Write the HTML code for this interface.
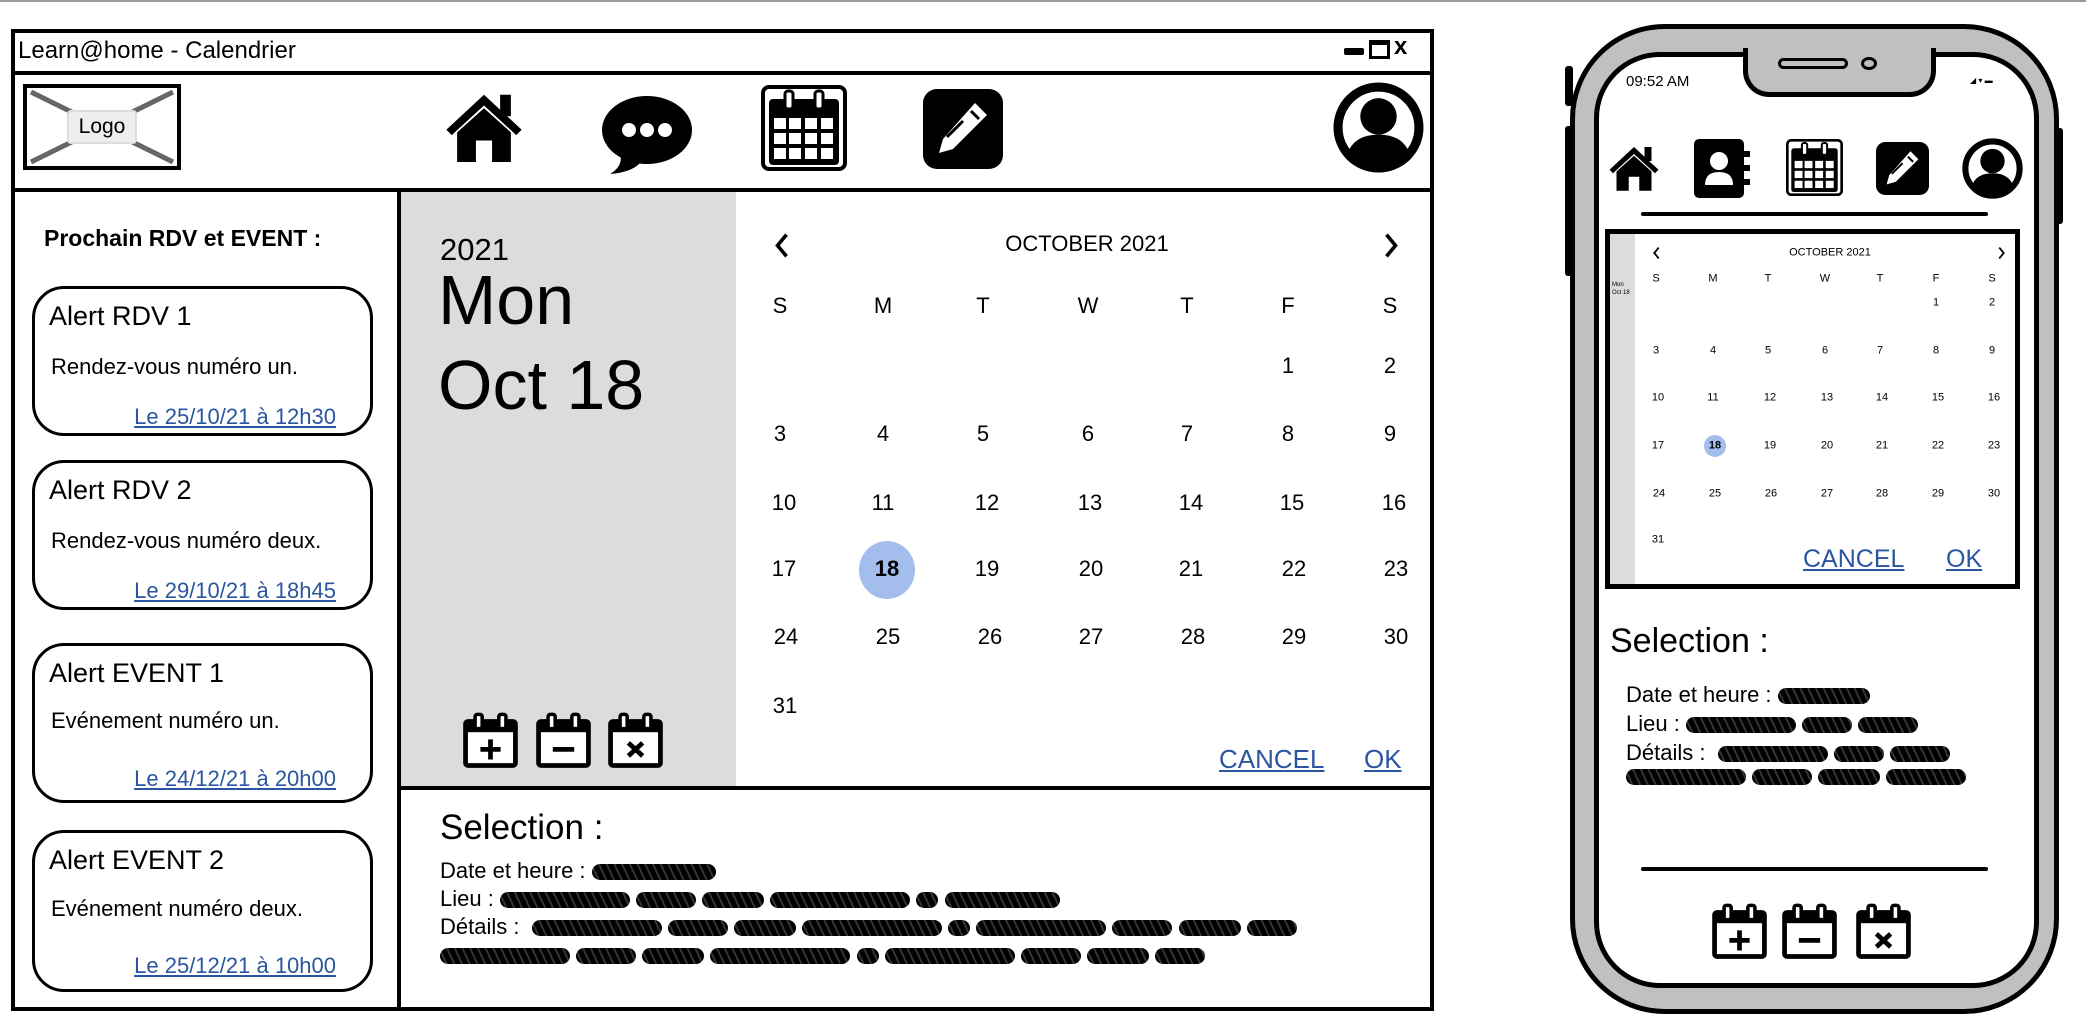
<!DOCTYPE html>
<html><head><meta charset="utf-8">
<style>
*{margin:0;padding:0;box-sizing:border-box}
body{width:2086px;height:1030px;background:#fff;position:relative;overflow:hidden;font-family:"Liberation Sans",sans-serif;color:#000}
.a{position:absolute}
.box{position:absolute;border:4px solid #000}
.d{position:absolute;width:70px;margin-left:-35px;text-align:center;line-height:1;transform:translateY(-50%);font-size:22px}
.m{position:absolute;width:30px;margin-left:-15px;text-align:center;line-height:1;transform:translateY(-50%);font-size:11px}
.card{position:absolute;left:32px;width:341px;border:3px solid #000;border-radius:32px}
.card .t{position:absolute;left:14px;top:12px;font-size:27px}
.card .b{position:absolute;left:16px;font-size:22px}
.card .l{position:absolute;right:34px;font-size:22px;color:#2a55a0;text-decoration:underline}
.s{display:inline-block;height:16px;background:repeating-linear-gradient(65deg,#000 0 5px,#333 5px 7px);border-radius:8px;vertical-align:middle}
.blue{color:#2a55a0;text-decoration:underline}
</style></head><body>
<svg width="0" height="0" style="position:absolute">
<defs>
<symbol id="cal" viewBox="0 0 48 48">
<rect x="3" y="8" width="42" height="37" rx="2" fill="#fff" stroke="#000" stroke-width="4"/>
<rect x="3" y="8" width="42" height="9" fill="#000"/>
<rect x="11" y="2" width="6" height="12" rx="2" fill="#fff" stroke="#000" stroke-width="3"/>
<rect x="31" y="2" width="6" height="12" rx="2" fill="#fff" stroke="#000" stroke-width="3"/>
</symbol>
<symbol id="home" viewBox="0 0 64 64">
<path d="M4 34 L32 8 L60 34 L56 38 L32 16 L8 38 Z" fill="#000"/>
<rect x="44" y="8" width="8" height="16" fill="#000"/>
<path d="M12 36 L32 18 L52 36 L52 58 L38 58 L38 42 L26 42 L26 58 L12 58 Z" fill="#000"/>
</symbol>
<symbol id="user" viewBox="0 0 90 90">
<circle cx="45" cy="45" r="40" fill="#fff" stroke="#000" stroke-width="9"/>
<circle cx="45" cy="34" r="18" fill="#000"/>
<path d="M14 72 Q20 52 45 52 Q70 52 76 72 Q62 86 45 86 Q28 86 14 72Z" fill="#000"/>
</symbol>
<symbol id="edit" viewBox="0 0 80 80">
<rect x="0" y="0" width="80" height="80" rx="14" fill="#000"/>
<path d="M52 14 L64 26 L30 60 L16 64 L20 50 Z" fill="#fff"/>
<path d="M48 22 L56 30" stroke="#000" stroke-width="3"/>
<path d="M24 48 L40 32" stroke="#000" stroke-width="3"/>
</symbol>
<symbol id="grid" viewBox="0 0 86 86">
<rect x="2" y="2" width="82" height="82" rx="6" fill="#fff" stroke="#000" stroke-width="4"/>
<rect x="8" y="14" width="70" height="66" rx="4" fill="#000"/>
<rect x="24" y="6" width="8" height="18" rx="3" fill="#fff" stroke="#000" stroke-width="3"/>
<rect x="54" y="6" width="8" height="18" rx="3" fill="#fff" stroke="#000" stroke-width="3"/>
<g fill="#fff">
<rect x="13" y="33" width="12" height="11"/><rect x="28" y="33" width="12" height="11"/><rect x="44" y="33" width="12" height="11"/><rect x="60" y="33" width="12" height="11"/>
<rect x="13" y="48" width="12" height="11"/><rect x="28" y="48" width="12" height="11"/><rect x="44" y="48" width="12" height="11"/><rect x="60" y="48" width="12" height="11"/>
<rect x="13" y="63" width="12" height="11"/><rect x="28" y="63" width="12" height="11"/><rect x="44" y="63" width="12" height="11"/><rect x="60" y="63" width="12" height="11"/>
</g>
</symbol>
<symbol id="chl" viewBox="0 0 20 30"><path d="M15 3 L5 15 L15 27" fill="none" stroke="#000" stroke-width="4"/></symbol>
<symbol id="chr" viewBox="0 0 20 30"><path d="M5 3 L15 15 L5 27" fill="none" stroke="#000" stroke-width="4"/></symbol>
</defs></svg>

<div class="a" style="left:0;top:0;width:2086px;height:2px;background:#999"></div>

<!-- window -->
<div class="box" style="left:11px;top:29px;width:1423px;height:982px"></div>
<div class="a" style="left:18px;top:37px;font-size:24px">Learn@home - Calendrier</div>
<div class="a" style="left:1344px;top:48px;width:20px;height:7px;background:#000;border-radius:2px"></div>
<div class="a" style="left:1369px;top:40px;width:21px;height:19px;border:3px solid #000;border-top-width:5px"></div>
<div class="a" style="left:1394px;top:33px;font-size:24px;font-weight:bold">x</div>
<div class="a" style="left:11px;top:71px;width:1423px;height:4px;background:#000"></div>

<!-- logo -->
<div class="box" style="left:23px;top:84px;width:158px;height:86px;overflow:hidden">
<svg class="a" style="left:0;top:0" width="150" height="78"><line x1="4" y1="4" x2="146" y2="74" stroke="#666" stroke-width="5"/><line x1="146" y1="4" x2="4" y2="74" stroke="#666" stroke-width="5"/></svg>
<div class="a" style="left:40px;top:22px;width:70px;height:34px;background:#eee;border:2px solid #ddd;border-radius:4px;font-size:21px;text-align:center;line-height:30px">Logo</div>
</div>
<svg class="a" style="left:441px;top:84px" width="86" height="86"><use href="#home"/></svg>
<svg class="a" style="left:600px;top:92px" width="94" height="84" viewBox="0 0 94 84"><ellipse cx="47" cy="38" rx="45" ry="34" fill="#000"/><path d="M20 60 Q24 74 10 82 Q36 80 44 66Z" fill="#000"/><circle cx="29" cy="38" r="7" fill="#fff"/><circle cx="47" cy="38" r="7" fill="#fff"/><circle cx="65" cy="38" r="7" fill="#fff"/></svg>
<svg class="a" style="left:761px;top:85px" width="86" height="86"><use href="#grid"/></svg>
<svg class="a" style="left:923px;top:89px" width="80" height="80"><use href="#edit"/></svg>
<svg class="a" style="left:1333px;top:82px" width="91" height="91"><use href="#user"/></svg>
<div class="a" style="left:11px;top:188px;width:1423px;height:4px;background:#000"></div>

<!-- left panel -->
<div class="a" style="left:397px;top:190px;width:4px;height:821px;background:#000"></div>
<div class="a" style="left:44px;top:225px;font-size:23px;font-weight:bold">Prochain RDV et EVENT :</div>
<div class="card" style="top:286px;height:150px"><div class="t">Alert RDV 1</div><div class="b" style="top:65px">Rendez-vous numéro un.</div><div class="l" style="top:115px">Le 25/10/21 à 12h30</div></div>
<div class="card" style="top:460px;height:150px"><div class="t">Alert RDV 2</div><div class="b" style="top:65px">Rendez-vous numéro deux.</div><div class="l" style="top:115px">Le 29/10/21 à 18h45</div></div>
<div class="card" style="top:643px;height:160px"><div class="t">Alert EVENT 1</div><div class="b" style="top:62px">Evénement numéro un.</div><div class="l" style="top:120px">Le 24/12/21 à 20h00</div></div>
<div class="card" style="top:830px;height:162px"><div class="t">Alert EVENT 2</div><div class="b" style="top:63px">Evénement numéro deux.</div><div class="l" style="top:120px">Le 25/12/21 à 10h00</div></div>

<!-- gray date panel -->
<div class="a" style="left:401px;top:192px;width:335px;height:595px;background:#dcdcdc"></div>
<div class="a" style="left:440px;top:232px;font-size:31px">2021</div>
<div class="a" style="left:438px;top:265px;font-size:70px;line-height:1">Mon</div>
<div class="a" style="left:438px;top:350px;font-size:70px;line-height:1">Oct 18</div>
<svg class="a" style="left:462px;top:712px" width="57" height="57" viewBox="0 0 48 48"><use href="#cal"/><path d="M24 23 V40 M15.5 31.5 H32.5" stroke="#000" stroke-width="4"/></svg>
<svg class="a" style="left:535px;top:712px" width="57" height="57" viewBox="0 0 48 48"><use href="#cal"/><path d="M15 31.5 H33" stroke="#000" stroke-width="4"/></svg>
<svg class="a" style="left:607px;top:712px" width="57" height="57" viewBox="0 0 48 48"><use href="#cal"/><path d="M18 26 L30 37 M30 26 L18 37" stroke="#000" stroke-width="4"/></svg>

<!-- main calendar -->
<svg class="a" style="left:773px;top:232px" width="18" height="27"><use href="#chl"/></svg>
<svg class="a" style="left:1382px;top:232px" width="18" height="27"><use href="#chr"/></svg>
<div class="d" style="left:1087px;top:244px;width:260px;margin-left:-130px">OCTOBER 2021</div>
<div class="d" style="left:780px;top:306px">S</div><div class="d" style="left:883px;top:306px">M</div><div class="d" style="left:983px;top:306px">T</div><div class="d" style="left:1088px;top:306px">W</div><div class="d" style="left:1187px;top:306px">T</div><div class="d" style="left:1288px;top:306px">F</div><div class="d" style="left:1390px;top:306px">S</div>
<div class="d" style="left:1288px;top:366px">1</div><div class="d" style="left:1390px;top:366px">2</div>
<div class="d" style="left:780px;top:434px">3</div><div class="d" style="left:883px;top:434px">4</div><div class="d" style="left:983px;top:434px">5</div><div class="d" style="left:1088px;top:434px">6</div><div class="d" style="left:1187px;top:434px">7</div><div class="d" style="left:1288px;top:434px">8</div><div class="d" style="left:1390px;top:434px">9</div>
<div class="d" style="left:784px;top:503px">10</div><div class="d" style="left:883px;top:503px">11</div><div class="d" style="left:987px;top:503px">12</div><div class="d" style="left:1090px;top:503px">13</div><div class="d" style="left:1191px;top:503px">14</div><div class="d" style="left:1292px;top:503px">15</div><div class="d" style="left:1394px;top:503px">16</div>
<div class="a" style="left:859px;top:541px;width:56px;height:58px;border-radius:50%;background:#a3bdec"></div>
<div class="d" style="left:784px;top:569px">17</div><div class="d" style="left:887px;top:569px;font-weight:bold">18</div><div class="d" style="left:987px;top:569px">19</div><div class="d" style="left:1091px;top:569px">20</div><div class="d" style="left:1191px;top:569px">21</div><div class="d" style="left:1294px;top:569px">22</div><div class="d" style="left:1396px;top:569px">23</div>
<div class="d" style="left:786px;top:637px">24</div><div class="d" style="left:888px;top:637px">25</div><div class="d" style="left:990px;top:637px">26</div><div class="d" style="left:1091px;top:637px">27</div><div class="d" style="left:1193px;top:637px">28</div><div class="d" style="left:1294px;top:637px">29</div><div class="d" style="left:1396px;top:637px">30</div>
<div class="d" style="left:785px;top:706px">31</div>
<div class="a blue" style="left:1219px;top:744px;font-size:26px">CANCEL</div>
<div class="a blue" style="left:1364px;top:744px;font-size:26px">OK</div>

<!-- selection -->
<div class="a" style="left:399px;top:786px;width:1035px;height:4px;background:#000"></div>
<div class="a" style="left:440px;top:808px;font-size:35px">Selection :</div>
<div class="a" style="left:440px;top:857px;font-size:22px;line-height:28px;width:990px">
<div>Date et heure : <span class="s" style="width:124px"></span></div>
<div>Lieu : <span class="s" style="width:130px"></span> <span class="s" style="width:60px"></span> <span class="s" style="width:62px"></span> <span class="s" style="width:140px"></span> <span class="s" style="width:22px"></span> <span class="s" style="width:115px"></span></div>
<div>Détails : &nbsp;<span class="s" style="width:130px"></span> <span class="s" style="width:60px"></span> <span class="s" style="width:62px"></span> <span class="s" style="width:140px"></span> <span class="s" style="width:22px"></span> <span class="s" style="width:130px"></span> <span class="s" style="width:60px"></span> <span class="s" style="width:62px"></span> <span class="s" style="width:50px"></span></div>
<div><span class="s" style="width:130px"></span> <span class="s" style="width:60px"></span> <span class="s" style="width:62px"></span> <span class="s" style="width:140px"></span> <span class="s" style="width:22px"></span> <span class="s" style="width:130px"></span> <span class="s" style="width:60px"></span> <span class="s" style="width:62px"></span> <span class="s" style="width:50px"></span></div>
</div>

<!-- phone -->
<div class="a" style="left:1565px;top:66px;width:8px;height:40px;background:#000;border-radius:3px"></div>
<div class="a" style="left:1565px;top:126px;width:8px;height:80px;background:#000;border-radius:3px"></div>
<div class="a" style="left:1565px;top:166px;width:8px;height:110px;background:#000;border-radius:3px"></div>
<div class="a" style="left:2055px;top:128px;width:8px;height:96px;background:#000;border-radius:3px"></div>
<div class="a" style="left:1570px;top:24px;width:489px;height:990px;background:#c0c0c0;border:5px solid #000;border-radius:95px"></div>
<div class="a" style="left:1594px;top:52px;width:445px;height:936px;background:#fff;border:5px solid #000;border-radius:66px"></div>
<div class="a" style="left:1743px;top:48px;width:193px;height:49px;background:#c0c0c0;border:5px solid #000;border-top:none;border-radius:0 0 26px 26px"></div>
<div class="a" style="left:1778px;top:58px;width:70px;height:11px;border:3px solid #000;border-radius:6px;background:#c0c0c0"></div>
<div class="a" style="left:1861px;top:57px;width:16px;height:13px;border:3px solid #000;border-radius:50%"></div>
<div class="a" style="left:1626px;top:73px;font-size:15px">09:52 AM</div>
<div class="a" style="left:1970px;top:76px;font-size:8px">◢ ▾ ▬</div>
<svg class="a" style="left:1606px;top:140px" width="56" height="56" viewBox="0 0 64 64"><use href="#home"/></svg>
<svg class="a" style="left:1694px;top:139px" width="58" height="59" viewBox="0 0 58 59"><rect x="0" y="0" width="50" height="59" rx="5" fill="#000"/><rect x="50" y="12" width="6" height="6" fill="#000"/><rect x="50" y="26" width="6" height="6" fill="#000"/><rect x="50" y="40" width="6" height="6" fill="#000"/><circle cx="25" cy="22" r="9" fill="#fff"/><path d="M11 46 Q11 33 25 33 Q39 33 39 46 Z" fill="#fff"/></svg>
<svg class="a" style="left:1786px;top:139px" width="57" height="57"><use href="#grid"/></svg>
<svg class="a" style="left:1876px;top:142px" width="53" height="53"><use href="#edit"/></svg>
<svg class="a" style="left:1962px;top:138px" width="61" height="61"><use href="#user"/></svg>
<div class="a" style="left:1641px;top:212px;width:347px;height:4px;background:#000;border-radius:2px"></div>

<div class="a" style="left:1605px;top:229px;width:415px;height:360px;border:5px solid #000"></div>
<div class="a" style="left:1610px;top:234px;width:25px;height:350px;background:#dcdcdc"></div>
<div class="a" style="left:1612px;top:281px;font-size:6px;line-height:8px">Mon<br>Oct 18</div>
<svg class="a" style="left:1652px;top:246px" width="9" height="14"><use href="#chl"/></svg>
<svg class="a" style="left:1997px;top:246px" width="9" height="14"><use href="#chr"/></svg>
<div class="m" style="left:1830px;top:253px;width:150px;margin-left:-75px">OCTOBER 2021</div>
<div class="m" style="left:1656px;top:279px">S</div><div class="m" style="left:1713px;top:279px">M</div><div class="m" style="left:1768px;top:279px">T</div><div class="m" style="left:1825px;top:279px">W</div><div class="m" style="left:1880px;top:279px">T</div><div class="m" style="left:1936px;top:279px">F</div><div class="m" style="left:1992px;top:279px">S</div>
<div class="m" style="left:1936px;top:303px">1</div><div class="m" style="left:1992px;top:303px">2</div>
<div class="m" style="left:1656px;top:351px">3</div><div class="m" style="left:1713px;top:351px">4</div><div class="m" style="left:1768px;top:351px">5</div><div class="m" style="left:1825px;top:351px">6</div><div class="m" style="left:1880px;top:351px">7</div><div class="m" style="left:1936px;top:351px">8</div><div class="m" style="left:1992px;top:351px">9</div>
<div class="m" style="left:1658px;top:398px">10</div><div class="m" style="left:1713px;top:398px">11</div><div class="m" style="left:1770px;top:398px">12</div><div class="m" style="left:1827px;top:398px">13</div><div class="m" style="left:1882px;top:398px">14</div><div class="m" style="left:1938px;top:398px">15</div><div class="m" style="left:1994px;top:398px">16</div>
<div class="a" style="left:1704px;top:435px;width:22px;height:22px;border-radius:50%;background:#a3bdec"></div>
<div class="m" style="left:1658px;top:446px">17</div><div class="m" style="left:1715px;top:446px;font-weight:bold">18</div><div class="m" style="left:1770px;top:446px">19</div><div class="m" style="left:1827px;top:446px">20</div><div class="m" style="left:1882px;top:446px">21</div><div class="m" style="left:1938px;top:446px">22</div><div class="m" style="left:1994px;top:446px">23</div>
<div class="m" style="left:1659px;top:494px">24</div><div class="m" style="left:1715px;top:494px">25</div><div class="m" style="left:1771px;top:494px">26</div><div class="m" style="left:1827px;top:494px">27</div><div class="m" style="left:1882px;top:494px">28</div><div class="m" style="left:1938px;top:494px">29</div><div class="m" style="left:1994px;top:494px">30</div>
<div class="m" style="left:1658px;top:540px">31</div>
<div class="a blue" style="left:1803px;top:545px;font-size:25px">CANCEL</div>
<div class="a blue" style="left:1946px;top:545px;font-size:25px">OK</div>

<div class="a" style="left:1610px;top:622px;font-size:34px">Selection :</div>
<div class="a" style="left:1626px;top:680px;font-size:22px;line-height:29px;width:378px;white-space:nowrap;overflow:hidden">
<div>Date et heure : <span class="s" style="width:92px"></span></div>
<div>Lieu : <span class="s" style="width:110px"></span> <span class="s" style="width:50px"></span> <span class="s" style="width:60px"></span></div>
<div>Détails : &nbsp;<span class="s" style="width:110px"></span> <span class="s" style="width:50px"></span> <span class="s" style="width:60px"></span></div>
<div style="margin-top:-6px"><span class="s" style="width:120px"></span> <span class="s" style="width:60px"></span> <span class="s" style="width:62px"></span> <span class="s" style="width:80px"></span></div>
</div>
<div class="a" style="left:1641px;top:867px;width:347px;height:4px;background:#000;border-radius:2px"></div>
<svg class="a" style="left:1711px;top:903px" width="57" height="57" viewBox="0 0 48 48"><use href="#cal"/><path d="M24 23 V40 M15.5 31.5 H32.5" stroke="#000" stroke-width="4"/></svg>
<svg class="a" style="left:1781px;top:903px" width="57" height="57" viewBox="0 0 48 48"><use href="#cal"/><path d="M15 31.5 H33" stroke="#000" stroke-width="4"/></svg>
<svg class="a" style="left:1855px;top:903px" width="57" height="57" viewBox="0 0 48 48"><use href="#cal"/><path d="M18 26 L30 37 M30 26 L18 37" stroke="#000" stroke-width="4"/></svg>
</body></html>
